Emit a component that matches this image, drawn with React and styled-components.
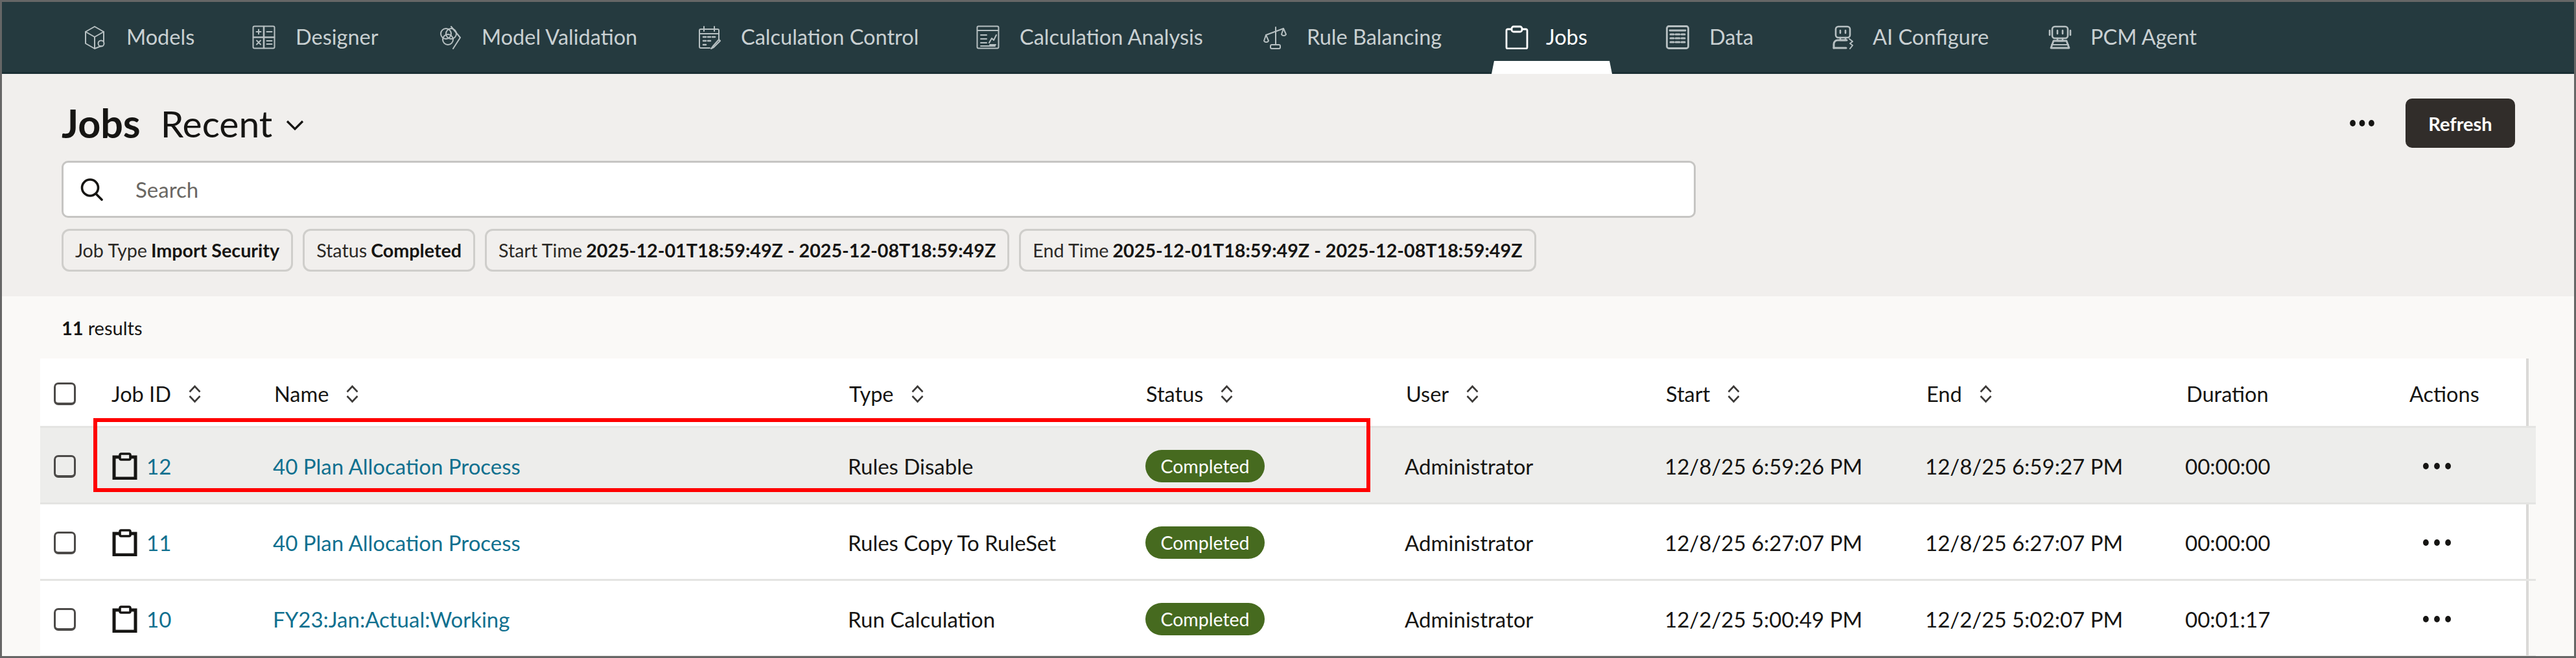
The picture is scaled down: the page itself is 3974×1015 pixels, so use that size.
import React from "react";
import styled, { createGlobalStyle } from "styled-components";

const Global = createGlobalStyle`
  html, body { margin: 0; padding: 0; background: #f1efed; }
  * { box-sizing: border-box; }
`;

const Page = styled.div`
  width: 3974px;
  height: 1015px;
  overflow: hidden;
  border: 3px solid #666;
  background: #faf9f7;
  font-family: Lato, "Noto Sans", sans-serif;
  color: #161513;
  display: flex;
  flex-direction: column;
`;

const NavBar = styled.nav`
  flex: none;
  height: 111px;
  background: #253a3f;
  border-bottom: 3px solid #1b2f34;
  padding-left: 125px;
  display: flex;
  align-items: stretch;
`;
const NavItem = styled.div`
  position: relative;
  flex: none;
  width: ${(p) => p.$width}px;
  display: flex;
  align-items: center;
  gap: ${(p) => p.$gap}px;
  color: ${(p) => (p.$active ? "#ffffff" : "#c9d0d2")};
`;
const NavLabel = styled.span`
  font-size: 32.5px;
  line-height: 40px;
  white-space: nowrap;
`;
const NavGlyph = styled.svg`
  width: 36px;
  height: 37px;
  flex: none;
  fill: none;
  stroke: ${(p) => (p.$active ? "#ffffff" : "#b7c0c2")};
  stroke-width: ${(p) => (p.$active ? 2.8 : 2)};
  stroke-linecap: round;
  stroke-linejoin: round;
`;
const ActiveTab = styled.span`
  position: absolute;
  left: -21px;
  bottom: -3px;
  width: 186px;
  height: 20px;
  background: #fff;
  clip-path: polygon(4px 0, 182px 0, 186px 100%, 0 100%);
`;

const Header = styled.header`
  flex: none;
  height: 343px;
  background: #f1efed;
  padding: 38px 91px 38px 92px;
  display: flex;
  flex-direction: column;
`;
const TitleRow = styled.div`
  height: 76px;
  display: flex;
  align-items: center;
`;
const Title = styled.h1`
  margin: 0;
  font-size: 61px;
  font-weight: 700;
  line-height: 64px;
`;
const ViewName = styled.span`
  font-size: 57px;
  line-height: 64px;
  margin-left: 31px;
`;
const Chevron = styled.svg`
  width: 28px;
  height: 16px;
  margin-left: 21px;
  margin-top: 6px;
  fill: none;
  stroke: #161513;
  stroke-width: 3.2;
`;
const Spacer = styled.div`
  flex: 1;
`;
const Dots = styled.svg`
  flex: none;
  fill: #161513;
  width: ${(p) => p.$w}px;
  height: 12px;
`;
const RefreshButton = styled.button`
  margin-left: 48px;
  width: 169px;
  height: 76px;
  border: 0;
  border-radius: 10px;
  background: #312d2a;
  color: #fff;
  font: 700 29px Lato, "Noto Sans", sans-serif;
`;
const SearchBox = styled.div`
  margin-top: 20px;
  width: 2521px;
  height: 88px;
  background: #fff;
  border: 3px solid #c6c5c3;
  border-radius: 10px;
  padding-left: 26px;
  display: flex;
  align-items: center;
  gap: 50px;
`;
const SearchGlyph = styled.svg`
  width: 35px;
  height: 35px;
  flex: none;
  fill: none;
  stroke: #161513;
  stroke-width: 3.6;
  stroke-linecap: round;
`;
const SearchHint = styled.span`
  font-size: 33px;
  color: #6a6763;
`;
const ChipRow = styled.div`
  margin-top: 17px;
  display: flex;
  gap: 15px;
`;
const Chip = styled.div`
  height: 66px;
  padding: 0 18px;
  border: 3px solid #cfcecb;
  border-radius: 12px;
  display: flex;
  align-items: center;
  gap: 6px;
  font-size: 28.7px;
  color: #2b2926;
  white-space: nowrap;
  b {
    font-weight: 700;
    color: #161513;
  }
`;

const ResultsBar = styled.div`
  flex: none;
  height: 96px;
  padding-left: 92px;
  display: flex;
  align-items: center;
  font-size: 29px;
  gap: 7px;
  b {
    font-weight: 700;
  }
`;

const TableArea = styled.div`
  flex: 1;
  margin-left: 59px;
  width: 3839px;
  background: #fff;
  border-right: 4px solid #dad9d7;
`;
const Row = styled.div`
  width: 3850px;
  height: ${(p) => (p.$head ? 107 : 118)}px;
  padding-top: ${(p) => (p.$head ? 4 : 3)}px;
  display: grid;
  grid-template-columns: 110px 251px 887px 458px 401px 401px 402px 401px 344px 195px;
  align-items: center;
  font-size: 33px;
  background: ${(p) => (p.$hover ? "#ededeb" : "transparent")};
  border-bottom: 3px solid #e4e4e2;
`;
const CheckCell = styled.div`
  padding-left: 21px;
  display: flex;
`;
const Checkbox = styled.span`
  width: 34px;
  height: 35px;
  border: 3px solid #4c4a48;
  border-bottom-width: 4px;
  border-radius: 7px;
`;
const HeadCell = styled.div`
  display: flex;
  align-items: center;
  gap: 26px;
  font-size: 32.5px;
  white-space: nowrap;
`;
const SortGlyph = styled.svg`
  width: 21px;
  height: 29px;
  flex: none;
  fill: none;
  stroke: #3c3a38;
  stroke-width: 2.6;
`;
const Cell = styled.div`
  margin-left: -2px;
  white-space: nowrap;
`;
const JobCell = styled.div`
  display: flex;
  align-items: center;
  gap: 14px;
`;
const JobGlyph = styled.svg`
  width: 40px;
  height: 42px;
  flex: none;
  fill: none;
  stroke: #161513;
  stroke-width: 5;
`;
const JobLink = styled.a`
  color: #10708f;
  text-decoration: none;
  white-space: nowrap;
`;
const NameLink = styled(JobLink)`
  margin-left: -2px;
`;
const Pill = styled.span`
  display: flex;
  align-items: center;
  justify-content: center;
  width: 184px;
  height: 50px;
  margin-left: 1px;
  border-radius: 25px;
  background: #466a1f;
  color: #fff;
  font-size: 28.5px;
`;
const ActionCell = styled.div`
  padding-left: 20px;
  display: flex;
`;
const HighlightBox = styled.div`
  position: absolute;
  left: 144px;
  top: 645px;
  width: 1970px;
  height: 114px;
  border: 6px solid #f00;
  pointer-events: none;
`;
const Stage = styled.div`
  position: relative;
`;

const icons = {
  models: (
    <>
      <path d="M18 2 32 10v15M28 32l-10 4-14-8V10L18 2" />
      <path d="M4 10l14 8 14-8M18 18v18" />
      <circle cx="28" cy="28" r="4.5" />
    </>
  ),
  designer: (
    <>
      <rect x="1.5" y="1.5" width="33" height="34" rx="2" />
      <path d="M18 2v33M2 18.5h32" strokeWidth="2.6" />
      <path d="M6.5 10h7M10 6.5v7M22.5 10h8M7 23.5l6 6M13 23.5l-6 6M22.5 24h8M22.5 29h8" />
    </>
  ),
  validation: (
    <>
      <path d="M20 2l14 17-11 17" />
      <circle cx="12" cy="13" r="8" />
      <circle cx="20" cy="13" r="8" />
      <circle cx="15" cy="22" r="8" />
    </>
  ),
  control: (
    <>
      <path d="M19 35H5a2 2 0 0 1-2-2V8a2 2 0 0 1 2-2h26a2 2 0 0 1 2 2v13" />
      <path d="M10 2v7M26 2v7M3 13h30" />
      <path d="M9 18h4M16 18h4M23 18h4M9 24h4M16 24h4M9 30h4" strokeWidth="2.6" />
      <path d="M33 22l-9 10-3 4 4-2 10-10z" />
    </>
  ),
  analysis: (
    <>
      <rect x="1.5" y="1.5" width="33" height="34" rx="2" />
      <path d="M2 8h32M7 15h9M7 21h9M7 27h9M7 32h22" />
      <path d="M20 27l4-7 3 3 4-8M21 30h9" />
    </>
  ),
  balance: (
    <>
      <path d="M19 3v27M4 15 31 5" />
      <path d="M4 15l-3 9a4 4 0 0 0 7 0zM31 5l-3 9a4 4 0 0 0 7 0z" />
      <rect x="11" y="30" width="15" height="6" rx="2" />
    </>
  ),
  jobs: (
    <>
      <path d="M10 6H4a2 2 0 0 0-2 2v26a2 2 0 0 0 2 2h28a2 2 0 0 0 2-2V8a2 2 0 0 0-2-2h-6" />
      <rect x="10" y="2" width="16" height="8" rx="3" />
    </>
  ),
  data: (
    <>
      <rect x="1.5" y="1.5" width="33" height="34" rx="3" strokeWidth="2.8" />
      <path d="M6 8h24" strokeWidth="2.8" />
      <path d="M7 14h5M15 14h6M24 14h5M7 20h5M15 20h6M24 20h5M7 26h5M15 26h6M24 26h5" strokeWidth="3" />
    </>
  ),
  aiConfig: (
    <>
      <rect x="6" y="2" width="22" height="17" rx="4" strokeWidth="2.6" />
      <path d="M13 8v4M21 8v4M13 19v4h8v-4" strokeWidth="2.6" />
      <path d="M3 35v-6a6 6 0 0 1 6-6h14" strokeWidth="3" />
      <path d="M3 35h19" strokeWidth="3" />
      <path d="M27 21l5 4-4 3 4 3-4 5" />
    </>
  ),
  agent: (
    <>
      <rect x="6" y="2" width="24" height="18" rx="4" strokeWidth="2.6" />
      <path d="M2 8v7M34 8v7M14 8v5M22 8v5M14 20v4h8v-4" strokeWidth="2.6" />
      <path d="M8 24h20l4 11H4z" strokeWidth="2.8" />
      <path d="M5 30h26" strokeWidth="2" />
    </>
  ),
};

const tabs = [
  ["Models", "models", 261, 31],
  ["Designer", "designer", 287, 31],
  ["Model Validation", "validation", 400, 31],
  ["Calculation Control", "control", 430, 31],
  ["Calculation Analysis", "analysis", 443, 31],
  ["Rule Balancing", "balance", 373, 31],
  ["Jobs", "jobs", 248, 27, true],
  ["Data", "data", 256, 31],
  ["AI Configure", "aiConfig", 334, 27],
  ["PCM Agent", "agent", 300, 29],
];

const columns = [
  ["Job ID", true],
  ["Name", true],
  ["Type", true],
  ["Status", true],
  ["User", true],
  ["Start", true],
  ["End", true],
  ["Duration", false],
  ["Actions", false],
];

const jobs = [
  ["12", "40 Plan Allocation Process", "Rules Disable", "12/8/25 6:59:26 PM", "12/8/25 6:59:27 PM", "00:00:00", true],
  ["11", "40 Plan Allocation Process", "Rules Copy To RuleSet", "12/8/25 6:27:07 PM", "12/8/25 6:27:07 PM", "00:00:00", false],
  ["10", "FY23:Jan:Actual:Working", "Run Calculation", "12/2/25 5:00:49 PM", "12/2/25 5:02:07 PM", "00:01:17", false],
];

const ThreeDots = ({ w }) => (
  <Dots $w={w} viewBox={`0 0 ${w} 12`}>
    <ellipse cx={w * 0.12} cy="6" rx="4.4" ry="5" />
    <ellipse cx={w * 0.5} cy="6" rx="4.4" ry="5" />
    <ellipse cx={w * 0.88} cy="6" rx="4.4" ry="5" />
  </Dots>
);

const Sort = () => (
  <SortGlyph viewBox="0 0 21 29">
    <path d="M2.5 11.5 10.5 3l8 8.5M2.5 18l8 8.5 8-8.5" />
  </SortGlyph>
);

export default function App() {
  return (
    <Stage>
      <Global />
      <Page>
        <NavBar>
          {tabs.map(([label, icon, width, gap, active]) => (
            <NavItem key={label} $width={width} $gap={gap} $active={active}>
              <NavGlyph viewBox="0 0 36 37" $active={active}>
                {icons[icon]}
              </NavGlyph>
              <NavLabel>{label}</NavLabel>
              {active && <ActiveTab />}
            </NavItem>
          ))}
        </NavBar>
        <Header>
          <TitleRow>
            <Title>Jobs</Title>
            <ViewName>Recent</ViewName>
            <Chevron viewBox="0 0 28 16">
              <path d="M2 2l12 12L26 2" />
            </Chevron>
            <Spacer />
            <ThreeDots w={38} />
            <RefreshButton>Refresh</RefreshButton>
          </TitleRow>
          <SearchBox>
            <SearchGlyph viewBox="0 0 35 35">
              <circle cx="15" cy="14.5" r="12.5" />
              <path d="M24 24l9 9" />
            </SearchGlyph>
            <SearchHint>Search</SearchHint>
          </SearchBox>
          <ChipRow>
            <Chip>Job Type <b>Import Security</b></Chip>
            <Chip>Status <b>Completed</b></Chip>
            <Chip>Start Time <b>2025-12-01T18:59:49Z - 2025-12-08T18:59:49Z</b></Chip>
            <Chip>End Time <b>2025-12-01T18:59:49Z - 2025-12-08T18:59:49Z</b></Chip>
          </ChipRow>
        </Header>
        <ResultsBar>
          <b>11</b> results
        </ResultsBar>
        <TableArea>
          <Row $head>
            <CheckCell>
              <Checkbox />
            </CheckCell>
            {columns.map(([label, sortable]) => (
              <HeadCell key={label}>
                {label}
                {sortable && <Sort />}
              </HeadCell>
            ))}
          </Row>
          {jobs.map(([id, name, type, start, end, duration, hover]) => (
            <Row key={id} $hover={hover}>
              <CheckCell>
                <Checkbox />
              </CheckCell>
              <JobCell>
                <JobGlyph viewBox="0 0 40 42">
                  <path d="M12 7H4v33h33V7h-8" />
                  <rect x="13" y="2" width="16" height="9" rx="2" strokeWidth="3.6" />
                </JobGlyph>
                <JobLink>{id}</JobLink>
              </JobCell>
              <NameLink>{name}</NameLink>
              <Cell>{type}</Cell>
              <Cell>
                <Pill>Completed</Pill>
              </Cell>
              <Cell>Administrator</Cell>
              <Cell>{start}</Cell>
              <Cell>{end}</Cell>
              <Cell>{duration}</Cell>
              <ActionCell>
                <ThreeDots w={45} />
              </ActionCell>
            </Row>
          ))}
        </TableArea>
      </Page>
      <HighlightBox />
    </Stage>
  );
}
